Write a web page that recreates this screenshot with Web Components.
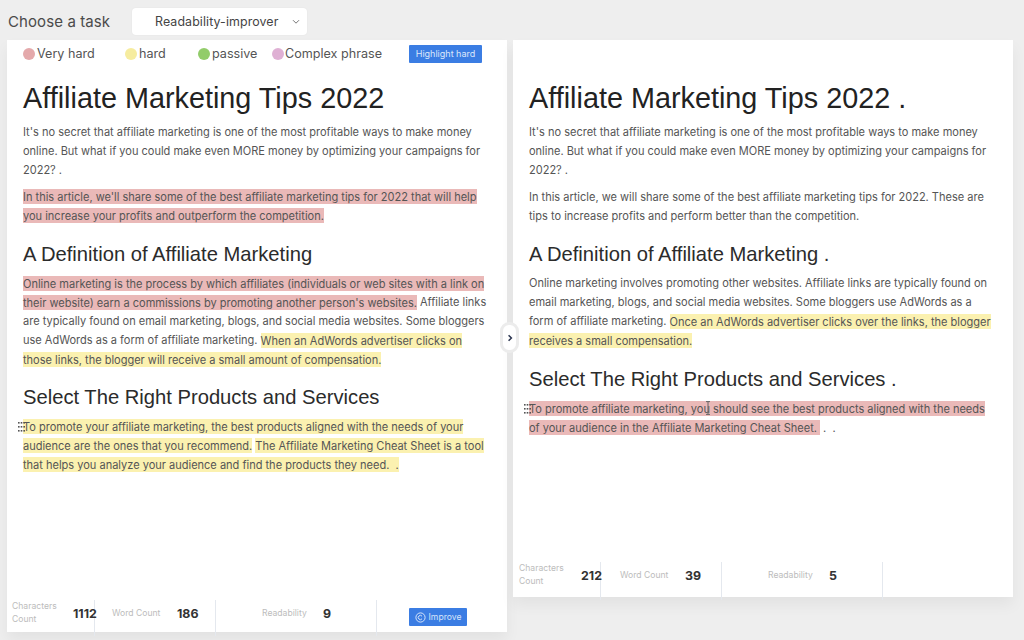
<!DOCTYPE html>
<html><head><meta charset="utf-8"><title>Readability improver</title>
<style>
html,body{margin:0;padding:0;background:#eeeeee;width:1024px;height:640px;overflow:hidden;font-family:Inter,"Liberation Sans",sans-serif}
</style></head><body>
<app-shell>
  <task-bar slot="top" label="Choose a task" value="Readability-improver"></task-bar>
  <doc-panel slot="left" h="592" legend chars="1112" words="186" score="9" improve>
    <h-one>Affiliate Marketing Tips 2022</h-one>
    <p-text>It's no secret that affiliate marketing is one of the most profitable ways to make money<br>online. But what if you could make even MORE money by optimizing your campaigns for<br>2022? .</p-text>
    <p-text><mark-span kind="red">In this article, we'll share some of the best affiliate marketing tips for 2022 that will help<br>you increase your profits and outperform the competition.</mark-span></p-text>
    <h-two>A Definition of Affiliate Marketing</h-two>
    <p-text><mark-span kind="red">Online marketing is the process by which affiliates (individuals or web sites with a link on<br>their website) earn a commissions by promoting another person's websites.</mark-span> Affiliate links<br>are typically found on email marketing, blogs, and social media websites. Some bloggers<br>use AdWords as a form of affiliate marketing. <mark-span kind="yellow">When an AdWords advertiser clicks on<br>those links, the blogger will receive a small amount of compensation.</mark-span></p-text>
    <h-two>Select The Right Products and Services</h-two>
    <p-text handle><mark-span kind="yellow">To promote your affiliate marketing, the best products aligned with the needs of your<br>audience are the ones that you recommend.</mark-span> <mark-span kind="yellow">The Affiliate Marketing Cheat Sheet is a tool<br>that helps you analyze your audience and find the products they need. &nbsp;.</mark-span></p-text>
  </doc-panel>
  <doc-panel slot="right" h="557" chars="212" words="39" score="5">
    <h-one>Affiliate Marketing Tips 2022 .</h-one>
    <p-text>It's no secret that affiliate marketing is one of the most profitable ways to make money<br>online. But what if you could make even MORE money by optimizing your campaigns for<br>2022? .</p-text>
    <p-text>In this article, we will share some of the best affiliate marketing tips for 2022. These are<br>tips to increase profits and perform better than the competition.</p-text>
    <h-two>A Definition of Affiliate Marketing .</h-two>
    <p-text>Online marketing involves promoting other websites. Affiliate links are typically found on<br>email marketing, blogs, and social media websites. Some bloggers use AdWords as a<br>form of affiliate marketing. <mark-span kind="yellow">Once an AdWords advertiser clicks over the links, the blogger<br>receives a small compensation.</mark-span></p-text>
    <h-two style="margin-top:17px">Select The Right Products and Services .</h-two>
    <p-text handle cursor><mark-span kind="red">To promote affiliate marketing, you should see the best products aligned with the needs<br>of your audience in the Affiliate Marketing Cheat Sheet. </mark-span> &nbsp;. &nbsp;.</p-text>
  </doc-panel>
</app-shell>
<script>
function def(name, css, html){
  customElements.define(name, class extends HTMLElement{
    connectedCallback(){
      if(this.shadowRoot) return;
      const r=this.attachShadow({mode:'open'});
      r.innerHTML='<style>'+css+'</style>'+(typeof html==='function'?html(this):html);
    }
  });
}
def('app-shell',`
:host{display:block;width:1024px;height:640px;position:relative}
.top{height:40px}
.cols{display:flex;gap:6px;padding-left:7px;align-items:flex-start}
.pill{position:absolute;left:500px;top:322px;width:19px;height:31px;box-sizing:border-box;background:#fff;border:3px solid #ececec;border-radius:9px;display:flex;align-items:center;justify-content:center}
`,`<div class="top"><slot name="top"></slot></div>
<div class="cols"><slot name="left"></slot><slot name="right"></slot></div>
<div class="pill"><svg width="8" height="8" viewBox="0 0 8 8"><path d="M2.6 1.2 5.4 4 2.6 6.8" fill="none" stroke="#2b3550" stroke-width="1.5"/></svg></div>`);
def('task-bar',`
:host{display:flex;align-items:center;height:40px;padding:3px 0 0 8px;box-sizing:border-box;font-family:Inter,sans-serif}
.l{font-size:15px;color:#4a4a4a;width:124px;letter-spacing:.1px}
.s{width:175px;height:27px;background:#fff;border-radius:4px;display:flex;align-items:center;padding-left:23px;box-sizing:border-box;font-size:12.4px;color:#444;box-shadow:0 0 2px rgba(0,0,0,.06)}
.s span{width:137px;letter-spacing:.1px;white-space:nowrap}
`,h=>`<div class="l">${h.getAttribute('label')}</div><div class="s"><span>${h.getAttribute('value')}</span><svg width="8" height="6" viewBox="0 0 8 6"><path d="M1 1.2 4 4.2 7 1.2" fill="none" stroke="#777" stroke-width="1"/></svg></div>`);
def('doc-panel',`
:host{display:flex;flex-direction:column;width:500px;background:#fff;box-sizing:border-box;box-shadow:0 8px 14px rgba(0,0,0,.05)}
.legend{display:grid;grid-template-columns:102px 73px 74px 137px 73px;height:27px;padding:0 0 1px 16px;align-items:center;font-size:12.6px;color:#555;flex:none}
.legend div{display:flex;align-items:center;gap:2px;white-space:nowrap}
.legend div:nth-child(4){gap:1px}
.legend i{width:12px;height:12px;border-radius:50%;flex:none}
.legend button{all:unset;width:73px;height:18px;background:#3b7de3;color:#dbe8fb;font-size:9px;text-align:center;line-height:18px;border-radius:1px}
.body{padding:0 16px;flex:1}
.nolegend{padding-top:28px}
.foot{display:grid;grid-template-columns:88px 121px 161px 130px;flex:none;height:32px}
.foot.r{height:35px}
.c{border-right:1.5px solid #e4e8ee;display:flex;align-items:center;box-sizing:border-box;padding-bottom:10px}
.foot.r .c{padding-bottom:12px}
.c:last-child{border:0;justify-content:center}
.lab{font-size:8.6px;color:#bcbcbc;line-height:13px;flex:none}
.val{font-size:12.4px;font-weight:700;color:#333;white-space:nowrap}
.c1{padding-left:5px}.c1 .lab{width:61px}
.c2{padding-left:17px}.c2 .lab{width:65px}
.c3{padding-left:46px}.c3 .lab{width:61px}
.foot.r .c1{padding-left:6px}
.foot.r .c1 .lab{width:62px}
.foot.r .c2{padding-left:19px}
.imp{all:unset;display:flex;align-items:center;justify-content:center;gap:3px;width:58px;height:18px;background:#3b7de3;color:#d6e4fa;font-size:8.6px;border-radius:1px;margin:8px 8px 0 0}
`,h=>{
 const leg=h.hasAttribute('legend');
 h.style.height=h.getAttribute('h')+'px';
 return `${leg?`<div class="legend">
 <div><i style="background:#e4a9ab"></i>Very hard</div>
 <div><i style="background:#f6ec9f"></i>hard</div>
 <div><i style="background:#92cc6a"></i>passive</div>
 <div><i style="background:#dfb0d4"></i>Complex phrase</div>
 <button>Highlight hard</button></div>`:''}
 <div class="body ${leg?'':'nolegend'}"><slot></slot></div>
 <div class="foot ${leg?'':'r'}">
 <div class="c c1"><div class="lab">Characters Count</div><div class="val">${h.getAttribute('chars')}</div></div>
 <div class="c c2"><div class="lab">Word Count</div><div class="val">${h.getAttribute('words')}</div></div>
 <div class="c c3"><div class="lab">Readability</div><div class="val">${h.getAttribute('score')}</div></div>
 <div class="c">${h.hasAttribute('improve')?`<button class="imp"><svg width="11" height="11" viewBox="0 0 11 11"><circle cx="5.5" cy="5.5" r="4.6" fill="none" stroke="#d6e4fa" stroke-width="1"/><path d="M7 4.2A2.1 2.1 0 1 0 7 6.8" fill="none" stroke="#d6e4fa" stroke-width="1"/></svg>Improve</button>`:''}</div>
 </div>`;});
def('h-one',`:host{display:block;font:28.8px/38px "Liberation Sans",Arial,sans-serif;color:#222;margin:11px 0 5.5px}`,`<slot></slot>`);
def('h-two',`:host{display:block;font:20.2px/24px "Liberation Sans",Arial,sans-serif;color:#2b2b2b;margin:16.2px 0 8.5px}`,`<slot></slot>`);
def('p-text',`:host{display:block;position:relative;font:11.03px/19px Inter,sans-serif;color:#555;margin:0 0 8px;white-space:nowrap}
svg{position:absolute}
.d{left:-5px;top:4px}`,h=>`${h.hasAttribute('handle')?`<svg class="d" width="7" height="10" viewBox="0 0 7 10" fill="#555"><rect x="0" y="0" width="1.6" height="1.6"/><rect x="2.7" y="0" width="1.6" height="1.6"/><rect x="5.4" y="0" width="1.6" height="1.6"/><rect x="0" y="4" width="1.6" height="1.6"/><rect x="2.7" y="4" width="1.6" height="1.6"/><rect x="5.4" y="4" width="1.6" height="1.6"/><rect x="0" y="8" width="1.6" height="1.6"/><rect x="2.7" y="8" width="1.6" height="1.6"/><rect x="5.4" y="8" width="1.6" height="1.6"/></svg>`:''}${h.hasAttribute('cursor')?`<svg width="6" height="14" viewBox="0 0 6 14" style="left:176px;top:1.5px"><path d="M1 .6h4M1 13.4h4M3 .6v12.8" fill="none" stroke="#666" stroke-width="1"/></svg>`:''}<slot></slot>`);
def('mark-span',`:host{display:inline;padding:.5px 0;-webkit-box-decoration-break:clone;box-decoration-break:clone}
:host([kind=red]){background:#eab9b8}:host([kind=yellow]){background:#fbf1b0}`,`<slot></slot>`);
</script>
</body></html>
